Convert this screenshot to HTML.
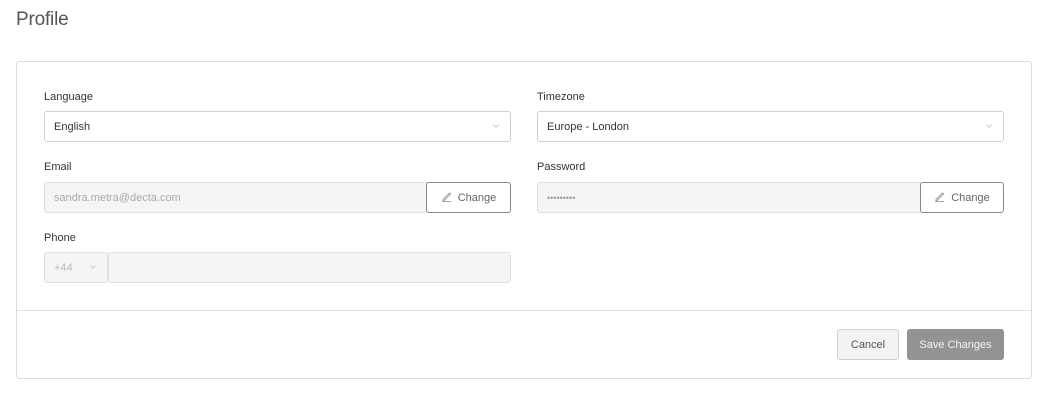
<!DOCTYPE html>
<html><head><style>
*{box-sizing:border-box;margin:0;padding:0}
body{width:1047px;height:400px;background:#fff;font-family:"Liberation Sans","DejaVu Sans",sans-serif;position:relative;overflow:hidden;color:#333}
.abs{position:absolute}
h1{position:absolute;left:16px;top:9px;font-size:19px;font-weight:normal;color:#555;letter-spacing:-0.2px}
.card{left:16px;top:61px;width:1016px;height:318px;border:1px solid #dcdcdc;border-radius:3px}
.div{left:17px;top:310px;width:1014px;height:1px;background:#e0e0e0}
.lbl{font-size:11px;color:#333}
.inp{height:31px;border:1px solid #d0d0d0;border-radius:3px;font-size:11px;line-height:30px;padding-left:9px;color:#333;background:#fff}
.dis{background:#f5f5f5;border-color:#e0e0e0;color:#aaa}
.chev{position:absolute;right:12px;top:11px;width:4px;height:4px;border-right:1px solid #ccc;border-bottom:1px solid #ccc;transform:rotate(45deg)}
.btn{height:31px;border:1px solid #888;border-radius:3px;font-size:11px;line-height:30px;color:#666;text-align:center;background:#fff}
</style></head><body>
<h1>Profile</h1>
<div class="abs card"></div>
<div class="abs div"></div>

<div class="abs lbl" style="left:44px;top:91px">Language</div>
<div class="abs inp" style="left:44px;top:111px;width:467px">English<span class="chev"></span></div>
<div class="abs lbl" style="left:537px;top:91px">Timezone</div>
<div class="abs inp" style="left:537px;top:111px;width:467px">Europe - London<span class="chev"></span></div>

<div class="abs lbl" style="left:44px;top:161px">Email</div>
<div class="abs inp dis" style="left:44px;top:182px;width:384px">sandra.metra@decta.com</div>
<div class="abs btn" style="left:426px;top:182px;width:85px"><svg width="11" height="11" viewBox="0 0 11 11" style="vertical-align:-1px;margin-right:6px"><path d="M2 8.5L8.5 2L9.5 3L3 9.5H2Z M1 10.5H10" fill="none" stroke="#888" stroke-width="0.8"/></svg>Change</div>
<div class="abs lbl" style="left:537px;top:161px">Password</div>
<div class="abs inp dis" style="left:537px;top:182px;width:385px;color:#999;font-size:9px">•••••••••</div>
<div class="abs btn" style="left:920px;top:182px;width:84px"><svg width="11" height="11" viewBox="0 0 11 11" style="vertical-align:-1px;margin-right:6px"><path d="M2 8.5L8.5 2L9.5 3L3 9.5H2Z M1 10.5H10" fill="none" stroke="#888" stroke-width="0.8"/></svg>Change</div>

<div class="abs lbl" style="left:44px;top:232px">Phone</div>
<div class="abs inp dis" style="left:44px;top:252px;width:64px;color:#bbb">+44<span class="chev"></span></div>
<div class="abs inp dis" style="left:108px;top:252px;width:403px"></div>

<div class="abs btn" style="left:837px;top:329px;width:62px;border-color:#d0d0d0;background:#f3f3f3;color:#555;line-height:31px">Cancel</div>
<div class="abs btn" style="left:907px;top:329px;width:97px;border-color:#939393;background:#939393;color:#f4f4f4;line-height:31px">Save Changes</div>
</body></html>
